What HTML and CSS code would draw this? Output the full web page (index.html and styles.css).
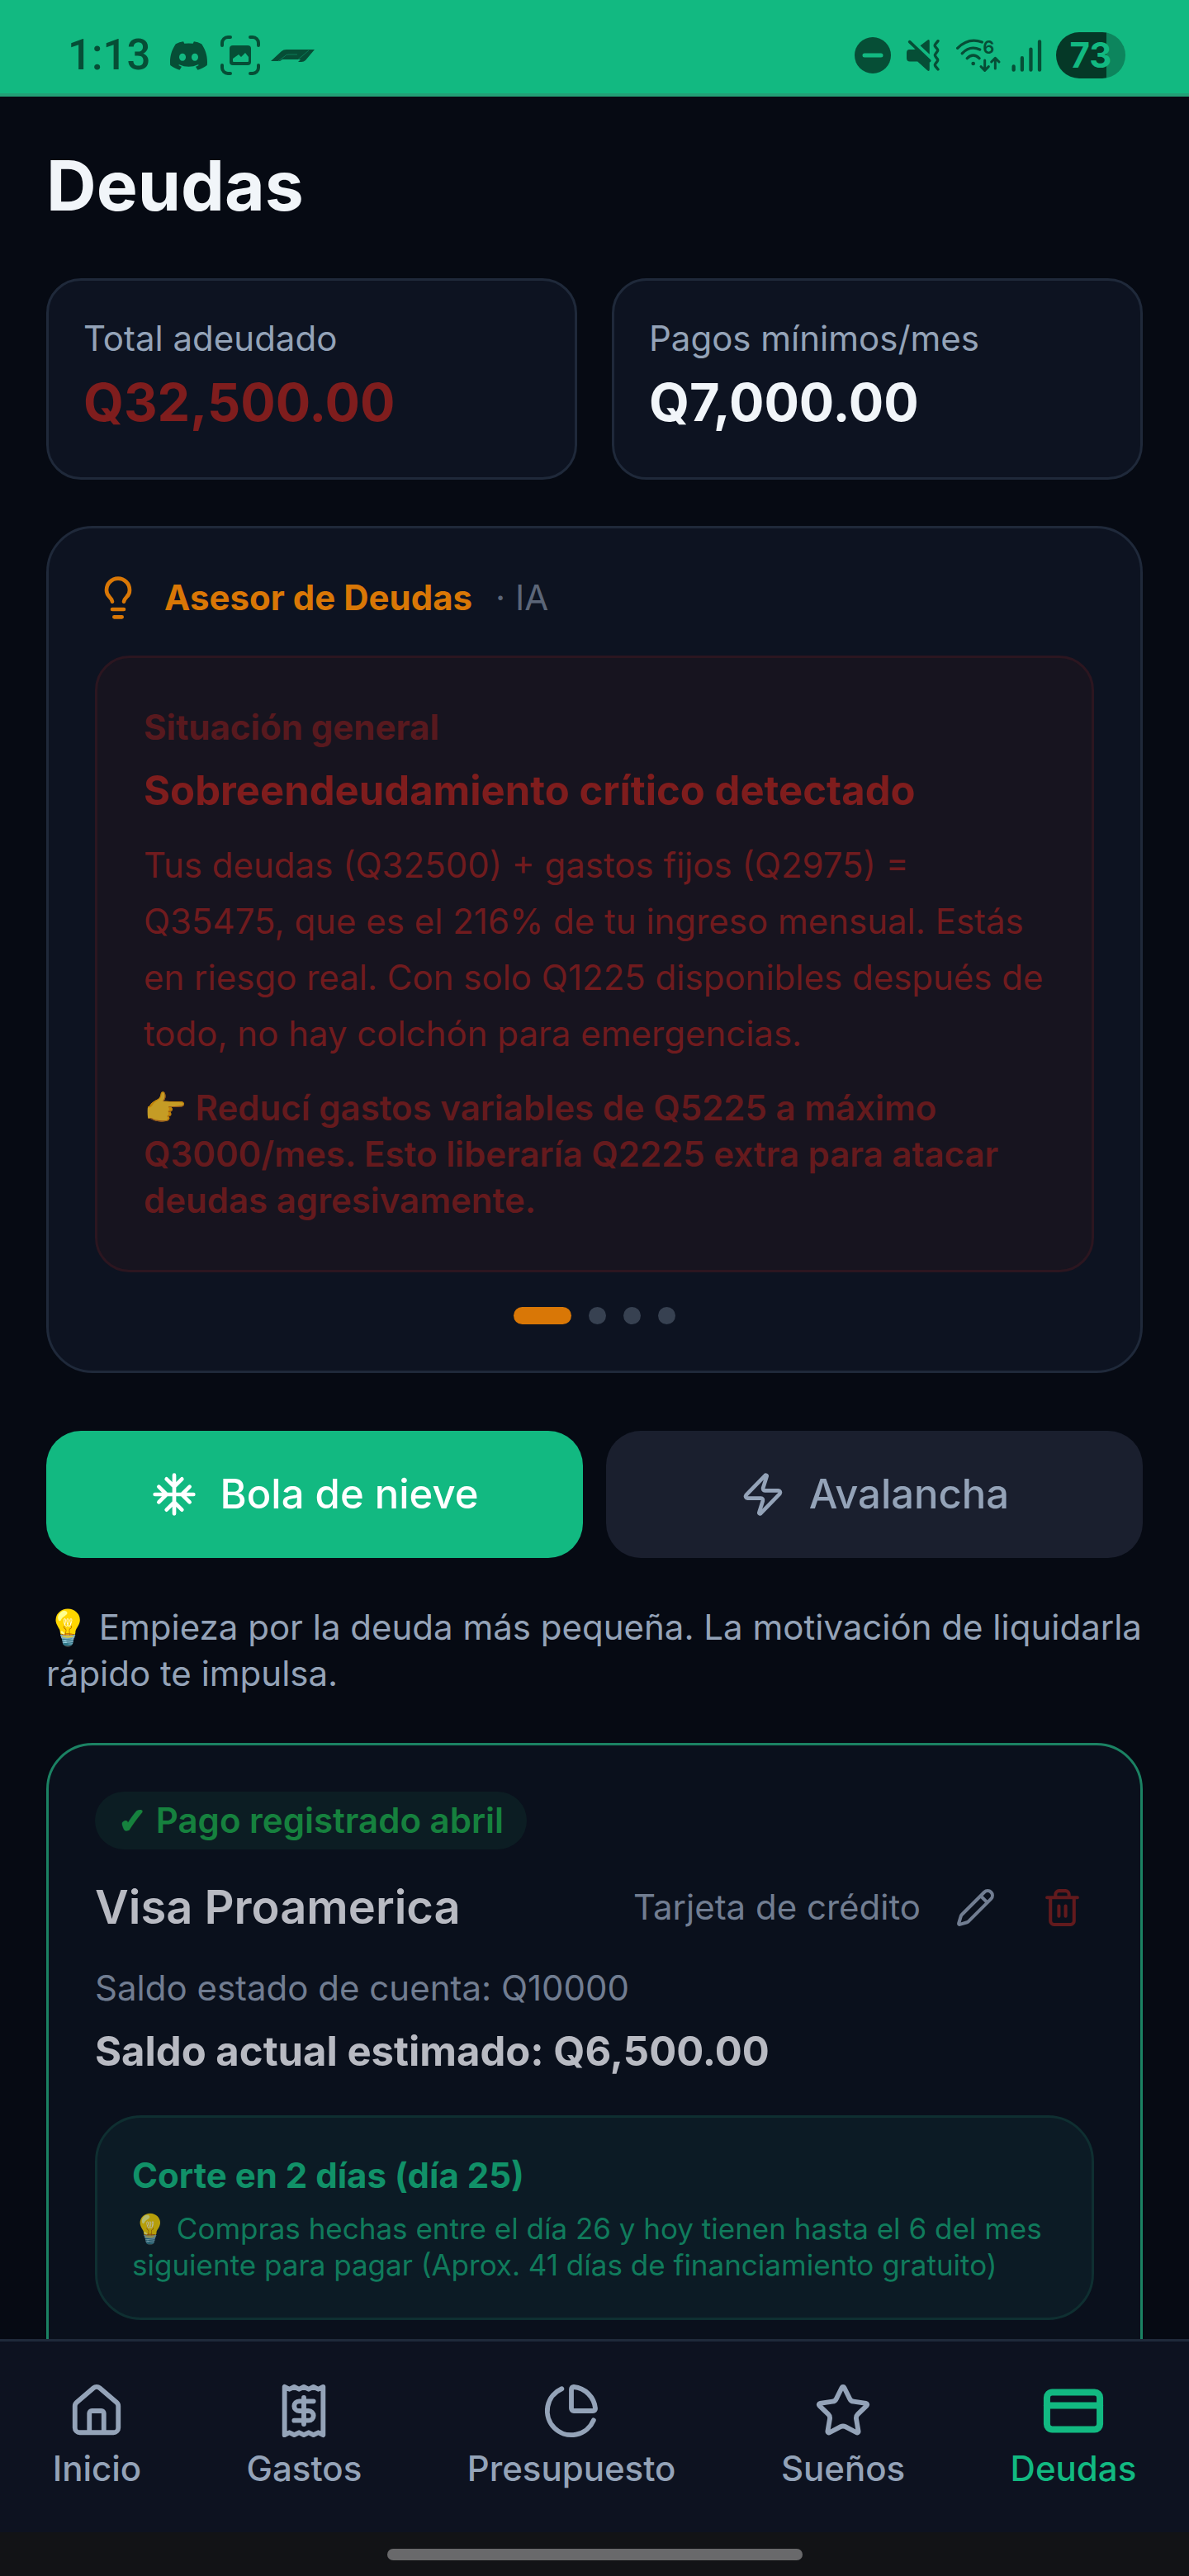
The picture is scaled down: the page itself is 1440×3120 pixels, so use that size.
FILE: index.html
```html
<!DOCTYPE html>
<html lang="es">
<head>
  <meta charset="utf-8">
  <meta name="viewport" content="width=device-width, initial-scale=1">
  <title>Deudas</title>
  <link rel="stylesheet" href="styles.css">
</head>
<body>
  <header class="status-bar">
    <div class="status-group status-left">
      <span class="clock">1:13</span>
      <svg class="status-discord" viewBox="0 0 24 24" fill="currentColor" aria-hidden="true"><path d="M20.317 4.37a19.79 19.79 0 00-4.885-1.515.074.074 0 00-.079.037c-.21.375-.444.865-.608 1.25a18.3 18.3 0 00-5.487 0 12.6 12.6 0 00-.617-1.25.077.077 0 00-.079-.037A19.74 19.74 0 003.677 4.37a.07.07 0 00-.032.027C.533 9.046-.32 13.58.099 18.058a.082.082 0 00.031.056c2.053 1.508 4.041 2.423 5.993 3.03a.078.078 0 00.084-.028c.462-.63.873-1.295 1.226-1.994a.076.076 0 00-.042-.106 13.1 13.1 0 01-1.872-.892.077.077 0 01-.008-.128c.126-.094.252-.192.372-.291a.074.074 0 01.078-.01c3.928 1.793 8.18 1.793 12.061 0a.074.074 0 01.079.009c.12.099.246.198.373.292a.077.077 0 01-.007.128 12.3 12.3 0 01-1.873.891.077.077 0 00-.041.107c.36.698.772 1.363 1.225 1.993a.076.076 0 00.084.029c1.961-.607 3.95-1.522 6.002-3.03a.077.077 0 00.032-.055c.5-5.177-.838-9.674-3.549-13.66a.061.061 0 00-.031-.029zM8.02 15.331c-1.183 0-2.157-1.086-2.157-2.419s.955-2.419 2.157-2.419c1.21 0 2.176 1.095 2.157 2.419 0 1.333-.956 2.419-2.157 2.419zm7.975 0c-1.183 0-2.157-1.086-2.157-2.419s.955-2.419 2.157-2.419c1.21 0 2.176 1.095 2.157 2.419 0 1.333-.946 2.419-2.157 2.419z"/></svg>
      <svg class="status-capture" viewBox="0 0 48 48" fill="none" aria-hidden="true">
        <path d="M12 2H9a7 7 0 0 0-7 7v3M36 2h3a7 7 0 0 1 7 7v3M12 46H9a7 7 0 0 1-7-7v-3M36 46h3a7 7 0 0 0 7-7v-3" stroke="currentColor" stroke-width="4" stroke-linecap="round"/>
        <rect x="11" y="12" width="26" height="24" rx="4" fill="currentColor"/>
        <path d="M15 31v-3l7-5 3 3 5-5 4 5v5q0 1-1 1H16q-1 0-1-1Z" fill="#12b981"/>
      </svg>
      <svg class="status-race" viewBox="0 0 53 15" fill="none" aria-hidden="true">
        <path d="M0 14 13 2Q15 0 19 0h34L42 13q-2 2-5 2h-4l3-3H14l-3 2Z" fill="currentColor"/>
        <path d="M9 14l8-6q1-2 4-2h11M33 12 46 1" stroke="#0c7a57" stroke-width="1"/>
      </svg>
    </div>
    <div class="status-group">
      <svg class="status-dnd" viewBox="0 0 44 44" aria-hidden="true">
        <circle cx="22" cy="22" r="22" fill="currentColor"/>
        <path d="M12 22h20" stroke="#12b981" stroke-width="5" stroke-linecap="round"/>
      </svg>
      <svg class="status-mute" viewBox="0 0 121 118" fill="none" aria-hidden="true">
        <path d="M10 36h16l10-2 48 42v32q0 10-8 5L40 80H12Q0 80 0 68V48q0-12 10-12ZM50 22 76 2q8-5 8 4v48Z" fill="currentColor"/>
        <path d="M11 8 84 77" stroke="currentColor" stroke-width="11" stroke-linecap="round"/>
        <path d="m115 5-9 11q-5 6 0 11l6 7q4 5 0 10l-6 8q-4 5 0 10l6 8q4 5 0 10l-6 8q-4 5 0 10l9 11" stroke="currentColor" stroke-width="10" stroke-linecap="round" stroke-linejoin="round"/>
      </svg>
      <svg class="status-wifi" viewBox="0 -18 165 159" fill="none" aria-hidden="true">
        <path d="M5 34Q45-6 94 12M22 53q28-30 64-14M40 71q22-22 44 0" stroke="currentColor" stroke-width="10" stroke-linecap="round"/>
        <circle cx="62" cy="90" r="7" fill="currentColor"/>
        <text class="wifi-generation" x="97" y="54">6</text>
        <path d="M104 78v36m-14-13 14 14 14-14M142 108V71m-14 13 14-14 14 14" stroke="currentColor" stroke-width="9" stroke-linecap="round" stroke-linejoin="round"/>
      </svg>
      <svg class="status-signal" viewBox="0 0 112 118" fill="none" aria-hidden="true"><path d="M8 98v13M39 67v44M71 35v76M103 7v104" stroke="currentColor" stroke-width="13" stroke-linecap="round"/></svg>
      <span class="battery">73</span>
    </div>
  </header>

  <main class="content">
    <h1 class="page-title">Deudas</h1>

    <section class="summary">
      <div class="card summary-card">
        <p class="summary-label">Total adeudado</p>
        <p class="summary-value summary-value-debt">Q32,500.00</p>
      </div>
      <div class="card summary-card">
        <p class="summary-label">Pagos mínimos/mes</p>
        <p class="summary-value">Q7,000.00</p>
      </div>
    </section>

    <section class="card advisor">
      <div class="advisor-head">
        <svg class="icon" viewBox="0 0 24 24" aria-hidden="true"><path d="M15 14c.2-1 .7-1.7 1.5-2.5 1-.9 1.5-2.2 1.5-3.5A6 6 0 0 0 6 8c0 1 .2 2.2 1.5 3.5.7.7 1.3 1.5 1.5 2.5M9 18h6M10 22h4"/></svg>
        <h2 class="advisor-title">Asesor de Deudas</h2>
        <span class="advisor-tag">· IA</span>
      </div>
      <article class="alert">
        <p class="alert-kicker">Situación general</p>
        <h3 class="alert-title">Sobreendeudamiento crítico detectado</h3>
        <p class="alert-text">Tus deudas (Q32500) + gastos fijos (Q2975) = Q35475, que es el 216% de tu ingreso mensual. Estás en riesgo real. Con solo Q1225 disponibles después de todo, no hay colchón para emergencias.</p>
        <p class="alert-action">👉 Reducí gastos variables de Q5225 a máximo Q3000/mes. Esto liberaría Q2225 extra para atacar deudas agresivamente.</p>
      </article>
      <div class="dots">
        <button class="dot dot-active" type="button" aria-label="Consejo 1"></button>
        <button class="dot" type="button" aria-label="Consejo 2"></button>
        <button class="dot" type="button" aria-label="Consejo 3"></button>
        <button class="dot" type="button" aria-label="Consejo 4"></button>
      </div>
    </section>

    <div class="strategies">
      <button class="strategy strategy-active" type="button">
        <svg class="icon" viewBox="0 0 24 24" aria-hidden="true"><path d="M2 12h20M12 2v20M20 16l-4-4 4-4M4 8l4 4-4 4M16 4l-4 4-4-4M8 20l4-4 4 4"/></svg>
        Bola de nieve
      </button>
      <button class="strategy" type="button">
        <svg class="icon" viewBox="0 0 24 24" aria-hidden="true"><path d="M4 14a1 1 0 0 1-.78-1.63l9.9-10.2a.5.5 0 0 1 .86.46l-1.92 6.02A1 1 0 0 0 13 10h7a1 1 0 0 1 .78 1.63l-9.9 10.2a.5.5 0 0 1-.86-.46l1.92-6.02A1 1 0 0 0 11 14z"/></svg>
        Avalancha
      </button>
    </div>

    <p class="hint">💡 Empieza por la deuda más pequeña. La motivación de liquidarla rápido te impulsa.</p>

    <article class="debt">
      <p class="badge"><span class="badge-check">✓</span> Pago registrado abril</p>
      <div class="debt-head">
        <h2 class="debt-name">Visa Proamerica</h2>
        <div class="debt-tools">
          <span class="debt-kind">Tarjeta de crédito</span>
          <button class="tool" type="button" aria-label="Editar">
            <svg class="icon" viewBox="0 0 24 24" aria-hidden="true"><path d="M21.174 6.812a1 1 0 0 0-3.986-3.987L3.842 16.174a2 2 0 0 0-.5.83l-1.321 4.352a.5.5 0 0 0 .623.622l4.353-1.32a2 2 0 0 0 .83-.497zM15 5l4 4"/></svg>
          </button>
          <button class="tool tool-delete" type="button" aria-label="Eliminar">
            <svg class="icon" viewBox="0 0 24 24" aria-hidden="true"><path d="M3 6h18M19 6v14c0 1-1 2-2 2H7c-1 0-2-1-2-2V6M8 6V4c0-1 1-2 2-2h4c1 0 2 1 2 2v2M10 11v6M14 11v6"/></svg>
          </button>
        </div>
      </div>
      <p class="debt-statement">Saldo estado de cuenta: Q10000</p>
      <p class="debt-balance">Saldo actual estimado: Q6,500.00</p>
      <div class="cutoff">
        <p class="cutoff-title">Corte en 2 días (día 25)</p>
        <p class="cutoff-text">💡 Compras hechas entre el día 26 y hoy tienen hasta el 6 del mes siguiente para pagar (Aprox. 41 días de financiamiento gratuito)</p>
      </div>
    </article>
  </main>

  <nav class="tabs">
    <a class="tab" href="#inicio">
      <svg class="icon" viewBox="0 0 24 24" aria-hidden="true"><path d="M15 21v-8a1 1 0 0 0-1-1h-4a1 1 0 0 0-1 1v8M3 10a2 2 0 0 1 .709-1.528l7-5.999a2 2 0 0 1 2.582 0l7 5.999A2 2 0 0 1 21 10v9a2 2 0 0 1-2 2H5a2 2 0 0 1-2-2z"/></svg>
      Inicio
    </a>
    <a class="tab" href="#gastos">
      <svg class="icon" viewBox="0 0 24 24" aria-hidden="true"><path d="M4 2v20l2-1 2 1 2-1 2 1 2-1 2 1 2-1 2 1V2l-2 1-2-1-2 1-2-1-2 1-2-1-2 1ZM16 8h-6a2 2 0 1 0 0 4h4a2 2 0 1 1 0 4H8M12 17.500v-11"/></svg>
      Gastos
    </a>
    <a class="tab" href="#presupuesto">
      <svg class="icon" viewBox="0 0 24 24" aria-hidden="true"><path d="M21 12c.552 0 1.005-.449.95-.998a10 10 0 0 0-8.953-8.951c-.55-.055-.998.398-.998.95v8a1 1 0 0 0 1 1zM21.210 15.890A10 10 0 1 1 8 2.830"/></svg>
      Presupuesto
    </a>
    <a class="tab" href="#suenos">
      <svg class="icon" viewBox="0 0 24 24" aria-hidden="true"><path d="M11.525 2.295a.53.53 0 0 1 .95 0l2.310 4.679a2.123 2.123 0 0 0 1.595 1.160l5.166.756a.53.53 0 0 1 .294.904l-3.736 3.638a2.123 2.123 0 0 0-.611 1.878l.882 5.140a.53.53 0 0 1-.771.560l-4.618-2.428a2.122 2.122 0 0 0-1.973 0L6.396 21.010a.53.53 0 0 1-.770-.560l.881-5.139a2.122 2.122 0 0 0-.611-1.879L2.160 9.795a.53.53 0 0 1 .294-.906l5.165-.755a2.122 2.122 0 0 0 1.597-1.160z"/></svg>
      Sueños
    </a>
    <a class="tab tab-active" href="#deudas" aria-current="page">
      <svg class="icon" viewBox="0 0 24 24" aria-hidden="true"><rect x="2" y="5" width="20" height="14" rx="2"/><path d="M2 10h20"/></svg>
      Deudas
    </a>
  </nav>
  <div class="gesture-bar"><span class="gesture-pill"></span></div>
</body>
</html>
```

FILE: styles.css
```css
:root {
  --page: #060a13;
  --surface: #0d1321;
  --border: #1f293a;
  --text: #f1f5f9;
  --muted: #94a3b8;
  --accent: #12b981;
  --amber: #d97706;
  --red: #7f1d1d;
}

* {
  box-sizing: border-box;
}

body {
  margin: 0;
  height: 100vh;
  display: flex;
  flex-direction: column;
  background: var(--page);
  color: var(--text);
  font-family: Inter, Roboto, sans-serif;
  font-size: 42px;
  line-height: 56px;
}

h1, h2, h3, p {
  margin: 0;
}

button {
  border: 0;
  padding: 0;
  background: none;
  color: inherit;
  font: inherit;
  cursor: pointer;
}

.icon {
  flex: none;
  display: block;
  width: 56px;
  height: 56px;
  fill: none;
  stroke: currentColor;
  stroke-width: 2;
  stroke-linecap: round;
  stroke-linejoin: round;
}

/* System status bar */

.status-bar {
  flex: none;
  display: flex;
  align-items: center;
  justify-content: space-between;
  padding: 17px 77px 0 82px;
  height: 117px;
  background: var(--accent);
  box-shadow: inset 0 -4px #22a076;
  color: #064e36;
}

.status-group {
  display: flex;
  align-items: center;
}

.clock {
  margin-right: 24px;
  font-family: Roboto, Inter, sans-serif;
  font-size: 51px;
  font-weight: 500;
}

.status-discord {
  width: 45px;
  height: 45px;
  margin-right: 16px;
}

.status-capture {
  width: 48px;
  height: 48px;
  margin-right: 13px;
}

.status-race {
  width: 53px;
  height: 15px;
}

.status-dnd {
  width: 44px;
  height: 44px;
  margin-right: 19px;
}

.status-mute {
  width: 40px;
  height: 39px;
  margin-right: 20px;
}

.status-wifi {
  width: 55px;
  height: 53px;
  margin-right: 12px;
}

.wifi-generation {
  fill: currentColor;
  font-size: 66px;
  font-weight: 600;
}

.status-signal {
  width: 37px;
  height: 39px;
  margin-right: 17px;
}

.battery {
  width: 84px;
  height: 56px;
  border-radius: 28px;
  background: linear-gradient(to right, #053827 73%, #0d855d 73%);
  color: var(--accent);
  font-weight: 700;
  text-align: center;
}

/* Scrolling content */

.content {
  flex: 1;
  min-height: 0;
  overflow-y: auto;
  scrollbar-width: none;
  padding: 52px 56px 56px;
}

.page-title {
  margin-bottom: 56px;
  font-size: 84px;
  font-weight: 700;
  line-height: 112px;
}

.card {
  background: var(--surface);
  border: 3px solid var(--border);
  border-radius: 56px;
}

.summary {
  display: grid;
  grid-template-columns: 1fr 1fr;
  gap: 42px;
  margin-bottom: 56px;
}

.summary-card {
  padding: 42px;
  border-radius: 42px;
}

.summary-label {
  color: var(--muted);
}

.summary-value {
  font-size: 63px;
  font-weight: 700;
  line-height: 98px;
}

.summary-value-debt {
  color: var(--red);
}

/* Advisor */

.advisor {
  margin-bottom: 70px;
  padding: 56px;
}

.advisor-head {
  display: flex;
  align-items: center;
  gap: 28px;
  margin-bottom: 42px;
  color: var(--amber);
}

.advisor-title {
  font-size: 42px;
  font-weight: 700;
}

.advisor-tag {
  color: #5c6678;
}

.alert {
  margin-bottom: 42px;
  padding: 56px;
  border: 3px solid #2c1620;
  border-radius: 42px;
  background: #17141f;
  color: var(--red);
}

.alert-kicker {
  margin-bottom: 14px;
  color: #58191e;
  font-weight: 700;
}

.alert-title {
  margin-bottom: 21px;
  font-size: 49px;
  font-weight: 700;
  line-height: 70px;
}

.alert-text {
  margin-bottom: 28px;
  color: #701b1e;
  line-height: 68px;
}

.alert-action {
  color: rgba(127, 29, 29, 0.75);
  font-weight: 600;
}

.dots {
  display: flex;
  justify-content: center;
  gap: 21px;
}

.dot {
  width: 21px;
  height: 21px;
  border-radius: 11px;
  background: #374151;
}

.dot-active {
  width: 70px;
  background: var(--amber);
}

/* Payoff strategy */

.strategies {
  display: grid;
  grid-template-columns: 1fr 1fr;
  gap: 28px;
  margin-bottom: 56px;
}

.strategy {
  display: flex;
  align-items: center;
  justify-content: center;
  gap: 28px;
  height: 154px;
  border-radius: 42px;
  background: #1a1f2e;
  color: var(--muted);
  font-size: 49px;
  font-weight: 500;
}

.strategy-active {
  background: var(--accent);
  color: #fff;
}

.hint {
  margin-bottom: 56px;
  color: var(--muted);
}

/* Debt card */

.debt {
  padding: 56px 56px 112px;
  border: 3px solid #1b8263;
  border-radius: 56px;
  background: #0a101c;
  color: #b8bac2;
}

.badge {
  width: fit-content;
  margin-bottom: 28px;
  padding: 7px 28px;
  border-radius: 35px;
  background: #0c1d23;
  color: #16813e;
  font-weight: 600;
}

.badge-check {
  font-family: "DejaVu Sans", sans-serif;
  line-height: 42px;
  -webkit-text-stroke: 3px currentColor;
}

.debt-head {
  display: flex;
  align-items: center;
  justify-content: space-between;
  margin-bottom: 28px;
}

.debt-name {
  font-size: 56px;
  font-weight: 600;
  line-height: 84px;
}

.debt-tools {
  display: flex;
  align-items: center;
  gap: 28px;
  color: #717d91;
}

.tool {
  padding: 14px;
}

.tool .icon {
  width: 49px;
  height: 49px;
}

.tool-delete {
  color: #621a1d;
}

.debt-statement {
  margin-bottom: 14px;
  color: #717d91;
}

.debt-balance {
  margin-bottom: 42px;
  font-size: 49px;
  font-weight: 700;
  line-height: 70px;
}

.cutoff {
  padding: 42px;
  border: 3px solid #0f2f31;
  border-radius: 56px;
  background: #0c1b25;
  color: #119168;
}

.cutoff-title {
  margin-bottom: 14px;
  font-weight: 700;
}

.cutoff-text {
  color: rgba(18, 168, 118, 0.7);
  font-size: 35px;
  line-height: 44px;
}

/* Bottom navigation */

.tabs {
  flex: none;
  display: flex;
  justify-content: space-around;
  padding: 49px 0;
  border-top: 3px solid var(--border);
  background: #0d1220;
}

.tab {
  display: flex;
  flex-direction: column;
  align-items: center;
  gap: 7px;
  color: var(--muted);
  font-weight: 500;
  text-decoration: none;
}

.tab .icon {
  width: 70px;
  height: 70px;
}

.tab-active {
  color: var(--accent);
}

.tab-active .icon {
  stroke-width: 2.5;
  transform: scale(1.1);
}

.gesture-bar {
  flex: none;
  display: flex;
  align-items: center;
  justify-content: center;
  height: 53px;
  background: #121316;
}

.gesture-pill {
  width: 503px;
  height: 14px;
  border-radius: 7px;
  background: #69696b;
}
```
